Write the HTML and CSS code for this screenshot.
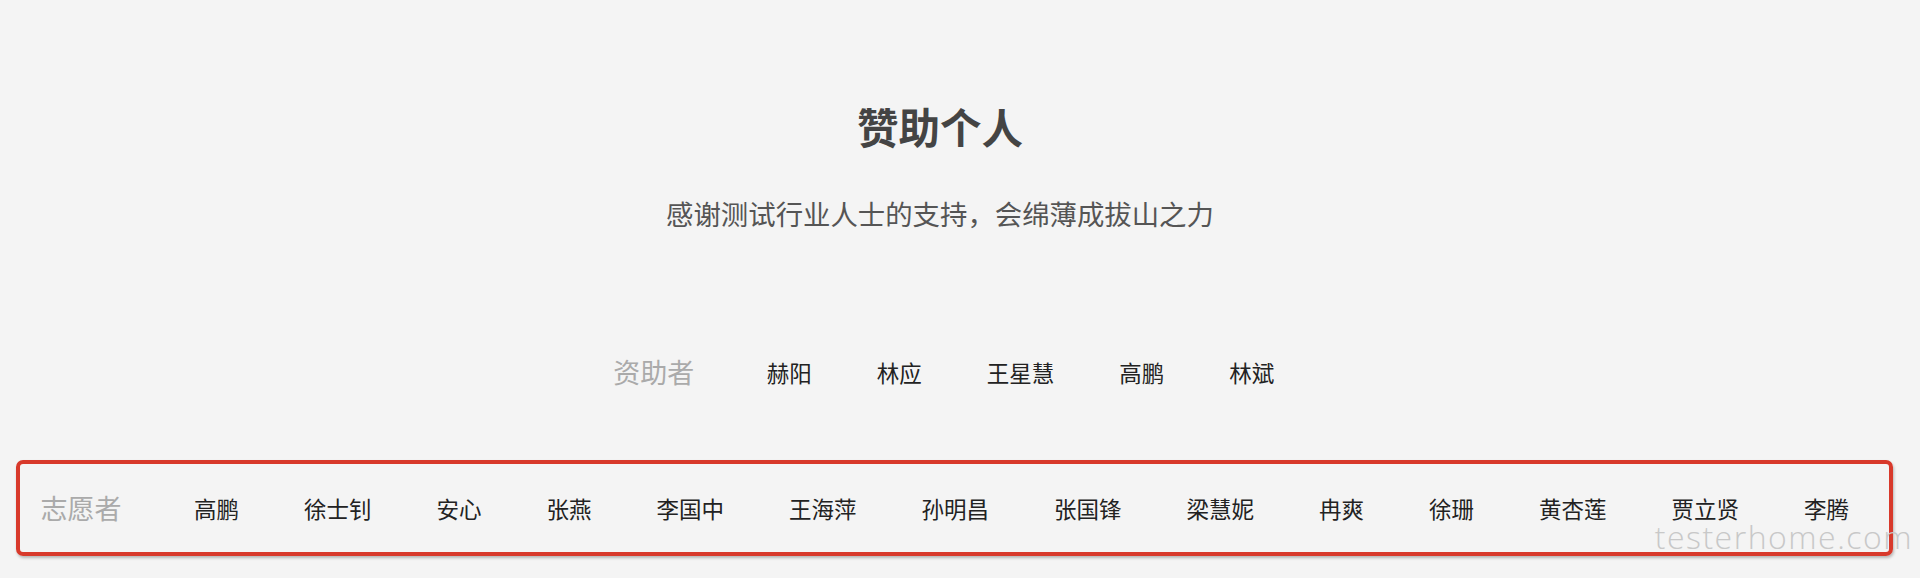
FILE: index.html
```html
<!DOCTYPE html>
<html lang="zh-CN">
<head>
    <meta charset="UTF-8">
    <meta name="viewport" content="width=device-width, initial-scale=1.0">
    <title>赞助个人</title>
    <link rel="stylesheet" href="styles.css">
</head>
<body>
    <div class="page">
        <h1 class="title">赞助个人</h1>
        <p class="subtitle">感谢测试行业人士的支持，会绵薄成拔山之力</p>

        <div class="people sponsors">
            <span class="label">资助者</span>
            <span class="name">赫阳</span>
            <span class="name">林应</span>
            <span class="name">王星慧</span>
            <span class="name">高鹏</span>
            <span class="name">林斌</span>
        </div>

        <div class="marked">
            <div class="people volunteers">
                <span class="label">志愿者</span>
                <span class="name">高鹏</span>
                <span class="name">徐士钊</span>
                <span class="name">安心</span>
                <span class="name">张燕</span>
                <span class="name">李国中</span>
                <span class="name">王海萍</span>
                <span class="name">孙明昌</span>
                <span class="name">张国锋</span>
                <span class="name">梁慧妮</span>
                <span class="name">冉爽</span>
                <span class="name">徐珊</span>
                <span class="name">黄杏莲</span>
                <span class="name">贾立贤</span>
                <span class="name">李腾</span>
            </div>
        </div>
    </div>

    <div class="watermark">testerhome.com</div>
</body>
</html>
```

FILE: styles.css
```css
html, body {
    margin: 0;
    height: 100%;
}
body {
    position: relative;
    overflow: hidden;
    font-family: "Noto Sans CJK SC", "Noto Sans", sans-serif;
    background-color: #f4f4f4;
    color: #333;
}
.page {
    padding-top: 98px;
}
.title {
    margin: 0 40px 0 0;
    text-align: center;
    font-size: 41.5px;
    line-height: 56px;
    font-weight: 700;
    color: #444;
}
.subtitle {
    margin: 39px 40px 0 0;
    text-align: center;
    font-size: 27.4px;
    line-height: 40px;
    color: #555;
}
.people {
    display: flex;
    justify-content: center;
    align-items: center;
    height: 48px;
    white-space: nowrap;
}
.sponsors {
    margin-top: 115px;
}
.label {
    margin-right: 40px;
    font-size: 27px;
    line-height: 36px;
    color: #aaa;
}
.name {
    padding: 0 32.5px;
    font-size: 22.5px;
    line-height: 30px;
    color: #222;
}
.marked {
    margin: 64px 27px 0 16px;
    padding: 20px 0 20px 13px;
    border: 4px solid #d8392b;
    border-radius: 7px;
    box-shadow: 1px 2px 3px rgba(0, 0, 0, 0.25);
}
.watermark {
    position: absolute;
    top: 527px;
    right: 7px;
    font-family: "Open Sans", sans-serif;
    font-weight: 300;
    font-size: 32px;
    line-height: 20px;
    letter-spacing: 1.5px;
    color: #c8c8c8;
}
```
